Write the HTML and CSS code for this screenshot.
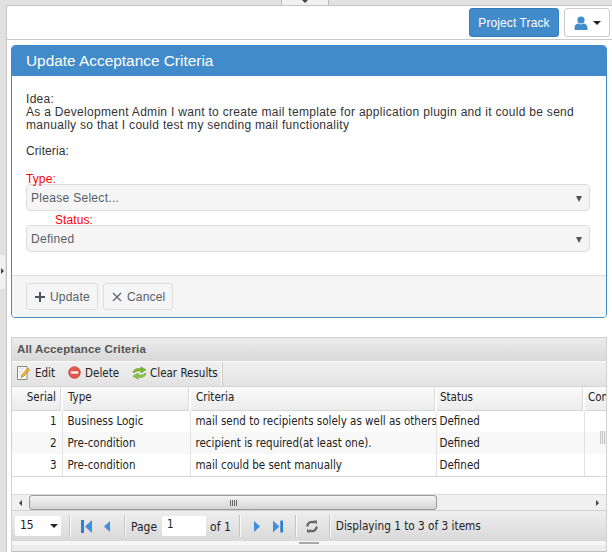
FILE: index.html
```html
<!DOCTYPE html>
<html lang="en">
<head>
<meta charset="utf-8">
<title>Update Acceptance Criteria</title>
<link rel="stylesheet" href="styles.css">
</head>
<body>
<div class="top-tab"><span class="top-arrow"></span></div>
<div class="side-handle"><span class="side-arrow"></span></div>
<main class="main">
  <header class="topbar">
    <a class="btn-track">Project Track</a>
    <button class="btn-user" type="button">
      <svg width="14" height="14" viewBox="0 0 14 14"><circle cx="7" cy="4" r="3.6" fill="#428bca"/><path d="M0.6 14V11.2C0.6 9 2.4 7.6 4.4 7.4L7 8.6L9.6 7.4C11.6 7.6 13.4 9 13.4 11.2V14Z" fill="#428bca"/></svg>
      <span class="caret"></span>
    </button>
  </header>

  <section class="panel">
    <h1 class="panel-title">Update Acceptance Criteria</h1>
    <div class="panel-body">
      <p class="idea">Idea:<br>As a Development Admin I want to create mail template for application plugin and it could be send manually so that I could test my sending mail functionality</p>
      <p class="criteria">Criteria:</p>
      <label class="req">Type:</label>
      <div class="select"><span>Please Select...</span><span class="sel-arrow"></span></div>
      <label class="req req-status">Status:</label>
      <div class="select"><span>Defined</span><span class="sel-arrow"></span></div>
    </div>
    <footer class="panel-foot">
      <button class="btn" type="button">
        <svg width="10" height="10" viewBox="0 0 10 10"><path d="M4 0h2v4h4v2h-4v4h-2v-4h-4v-2h4z" fill="#4a5560"/></svg>Update</button>
      <button class="btn" type="button">
        <svg width="10" height="10" viewBox="0 0 10 10"><path d="M1 1L9 9M9 1L1 9" stroke="#5a646e" stroke-width="1.3" fill="none"/></svg>Cancel</button>
    </footer>
  </section>

  <section class="grid">
    <div class="grid-title">All Acceptance Criteria</div>
    <div class="toolbar">
      <div class="tools">
        <span class="tool tool-edit">
          <svg width="14" height="16" viewBox="2 0 14 16"><path d="M2.5 1.5H12V14.5H2.5Z" fill="#fff" stroke="#8a8a7a"/><path d="M4 4H9M4 6.5H8M4 9H6" stroke="#d8d8c8"/><path d="M6 12.5L6.8 9.8L12.8 3.2L14.6 4.9L8.6 11.5Z" fill="#f2b53c" stroke="#b9791d" stroke-width=".7"/></svg>Edit</span>
        <span class="tool tool-del">
          <svg width="13" height="13" viewBox="0 0 14 14"><circle cx="7" cy="7" r="6.3" fill="#e2574c" stroke="#c9453c" stroke-width=".8"/><path d="M3 5.8H11V8.2H3Z" fill="#fff"/></svg>Delete</span>
        <span class="tool tool-clear">
          <svg width="15" height="14" viewBox="0 0 16 14"><path d="M1 6.5C1.8 3 5 1.5 9.5 2.4V0.4L15 3.6L9.5 7V5C6 4.4 3.5 5 2.8 6.5Z" fill="#7cb82f" stroke="#5f9420" stroke-width=".5"/><path d="M15 7.5C14.2 11 11 12.5 6.5 11.6V13.6L1 10.4L6.5 7V9C10 9.6 12.5 9 13.2 7.5Z" fill="#8cc63f" stroke="#5f9420" stroke-width=".5"/></svg>Clear Results</span>
      </div>
    </div>
    <div class="table-wrap">
      <table class="table">
        <colgroup><col class="c1"><col class="c2"><col class="c3"><col class="c4"><col class="c5"></colgroup>
        <thead>
          <tr><th class="num">Serial</th><th>Type</th><th>Criteria</th><th>Status</th><th>Comments</th></tr>
        </thead>
        <tbody>
          <tr><td class="num">1</td><td>Business Logic</td><td>mail send to recipients solely as well as others</td><td>Defined</td><td></td></tr>
          <tr class="alt"><td class="num">2</td><td>Pre-condition</td><td>recipient is required(at least one).</td><td>Defined</td><td></td></tr>
          <tr><td class="num">3</td><td>Pre-condition</td><td>mail could be sent manually</td><td>Defined</td><td></td></tr>
        </tbody>
      </table>
      <div class="col-grip"></div>
    </div>
    <div class="scrollbar">
      <span class="sb-arrow sb-left"></span>
      <div class="sb-track"><div class="sb-thumb"><span class="grip"></span></div></div>
      <span class="sb-arrow sb-right"></span>
    </div>
    <div class="pager">
      <div class="page-size"><span>15</span><span class="ps-arrow"></span></div>
      <span class="sep s1"></span>
      <svg class="pg p-first" width="11" height="13" viewBox="0 0 11 13"><path d="M0 0H3V13H0Z" fill="#2f7fd1"/><path d="M11 0V13L4 6.5Z" fill="#3f8fdf"/></svg>
      <svg class="pg p-prev" width="6" height="13" viewBox="0 0 7 13"><path d="M7 0V13L0 6.5Z" fill="#3f8fdf"/></svg>
      <span class="sep s2"></span>
      <span class="pg-text">Page</span>
      <span class="pg-input">1</span>
      <span class="pg-text">of 1</span>
      <span class="sep s3"></span>
      <svg class="pg p-next" width="6" height="13" viewBox="0 0 7 13"><path d="M0 0V13L7 6.5Z" fill="#3f8fdf"/></svg>
      <svg class="pg p-last" width="10" height="13" viewBox="0 0 11 13"><path d="M0 0V13L7 6.5Z" fill="#3f8fdf"/><path d="M8 0H11V13H8Z" fill="#2f7fd1"/></svg>
      <span class="sep s4"></span>
      <svg class="pg" width="12" height="13" viewBox="0 0 12 13"><path d="M1.4 6.5A4.6 4.6 0 0 1 8.8 2.8" fill="none" stroke="#666" stroke-width="2.2"/><path d="M10.6 6.5A4.6 4.6 0 0 1 3.2 10.2" fill="none" stroke="#666" stroke-width="2.2"/><path d="M7.5 0.4L11 0.4V4.6Z" fill="#666"/><path d="M4.5 12.6L1 12.6V8.4Z" fill="#666"/></svg>
      <span class="sep s5"></span>
      <span class="pg-info">Displaying 1 to 3 of 3 items</span>
    </div>
    <div class="resize"><span class="resize-bar"></span></div>
  </section>
</main>
</body>
</html>
```
FILE: styles.css
```css
* { box-sizing: border-box; }
html, body { height: 100%; }
body {
  margin: 0;
  padding: 5px 0 0 6px;
  background: #e1e1e1;
  font-family: "Liberation Sans", Arial, sans-serif;
  overflow: hidden;
  position: relative;
}
.top-tab {
  position: absolute;
  left: 281px; top: 0;
  width: 48px; height: 5px;
  background: #f1f1f1;
  border-left: 1px solid #b9b9b9;
  border-right: 1px solid #b9b9b9;
  display: flex;
  justify-content: center;
}
.top-arrow {
  height: 0;
  margin-top: 0;
  border-top: 3px solid #444;
  border-left: 3px solid transparent;
  border-right: 3px solid transparent;
}
.side-handle {
  position: absolute;
  left: 0; top: 255px;
  width: 5px; height: 34px;
  background: #f1f1f1;
  border-radius: 0 2px 2px 0;
}
.side-arrow {
  position: absolute;
  left: 1px; top: 13px;
  border-left: 3px solid #444;
  border-top: 3px solid transparent;
  border-bottom: 3px solid transparent;
}
.main {
  width: 606px;
  height: 547px;
  background: #fff;
  border-top: 1px solid #c6c6c6;
  border-left: 1px solid #c6c6c6;
}
.topbar {
  height: 34px;
  border-bottom: 1px solid #c9c9c9;
  display: flex;
  justify-content: flex-end;
  gap: 5px;
  padding: 2px 2px 0 0;
}
.btn-track {
  width: 90px; height: 29px;
  background: #428bca;
  border: 1px solid #357ebd;
  border-radius: 3px;
  color: #fff;
  font-size: 12px;
  letter-spacing: .1px;
  display: flex; align-items: center; justify-content: center;
}
.btn-user {
  width: 46px; height: 29px;
  background: #fff;
  border: 1px solid #ccc;
  border-radius: 3px;
  padding: 0;
  display: flex; align-items: center; justify-content: center;
  gap: 5px;
}
.caret {
  border-top: 4px solid #222;
  border-left: 4px solid transparent;
  border-right: 4px solid transparent;
}
.panel {
  width: 596px;
  height: 273px;
  margin: 5px 0 0 4px;
  border: 1px solid #428bca;
  border-radius: 4px;
  overflow: hidden;
  display: flex;
  flex-direction: column;
}
.panel-title {
  margin: 0;
  height: 30px;
  padding: 0 0 0 14px;
  background: #428bca;
  color: #fff;
  font-size: 15.4px;
  font-weight: 400;
  line-height: 29px;
}
.panel-body {
  flex: 1;
  padding: 17px 14px 0;
  color: #333;
  font-size: 12px;
  line-height: 13px;
}
.idea, .criteria { margin: 0; letter-spacing: .3px; }
.criteria { margin-top: 13px; margin-bottom: 15px; letter-spacing: .1px; }
.req { display: block; color: #f00; height: 11px; letter-spacing: .1px; }
.req-status { padding-left: 29px; margin-top: 3px; }
.select {
  width: 564px;
  height: 27px;
  background: #f5f5f5;
  border: 1px solid #ddd;
  border-radius: 4px;
  display: flex; align-items: center; justify-content: space-between;
  padding: 2px 7px 0 4px;
  color: #555e68;
  letter-spacing: .3px;
}
.sel-arrow {
  border-top: 6px solid #555;
  border-left: 3.5px solid transparent;
  border-right: 3.5px solid transparent;
}
.panel-foot {
  height: 42px;
  background: #f5f5f5;
  border-top: 1px solid #ddd;
  padding: 7px 14px 0;
  display: flex;
  gap: 5px;
  align-items: flex-start;
}
.btn {
  height: 27px;
  background: #f5f5f5;
  border: 1px solid #ddd;
  border-radius: 3px;
  padding: 0 7px 0 8px;
  font: 12px "Liberation Sans", Arial, sans-serif;
  letter-spacing: .2px;
  color: #56606a;
  display: flex; align-items: center; gap: 5px;
}
.grid {
  width: 596px;
  height: 215px;
  margin: 19px 0 0 4px;
  border: 1px solid #d0d0d0;
  border-bottom-color: #bdbdbd;
  background: #e4e4e4;
  font-family: "DejaVu Sans Condensed", "DejaVu Sans", "Liberation Sans", sans-serif;
  font-stretch: condensed;
  font-size: 11.5px;
  display: flex;
  flex-direction: column;
  overflow: hidden;
}
.grid-title {
  height: 24px;
  flex: none;
  background: linear-gradient(#ececec, #d8d8d8);
  border-bottom: 1px solid #fafafa;
  color: #555;
  font-family: "Liberation Sans", Arial, sans-serif;
  font-weight: 700;
  font-size: 11.5px;
  line-height: 22px;
  padding-left: 5px;
  letter-spacing: .15px;
}
.toolbar {
  height: 25px;
  flex: none;
  background: linear-gradient(#f0f0f0, #e2e2e2);
  border-bottom: 1px solid #d4d4d4;
}
.tools {
  display: inline-flex;
  height: 24px;
  width: 210px;
  align-items: center;
  padding: 0 0 3px 5px;
  border-right: 1px solid #fdfdfd;
  box-shadow: 1px 0 0 #c9c9c9;
  color: #222;
  white-space: nowrap;
}
.tool { display: inline-flex; align-items: center; }
.tool-edit svg { margin-right: 4px; }
.tool-del { margin-left: 13px; }
.tool-del svg { margin-right: 4px; }
.tool-clear { margin-left: 13px; }
.tool-clear svg { margin-right: 3px; }
.table-wrap {
  height: 107px;
  flex: none;
  background: #fff;
  overflow: hidden;
  position: relative;
}
.table {
  border-collapse: collapse;
  table-layout: fixed;
  width: 650px;
}
.c1 { width: 50px; } .c2 { width: 128px; } .c3 { width: 246px; } .c4 { width: 148px; } .c5 { width: 78px; }
.table th, .table td {
  font-weight: 400;
  text-align: left;
  padding: 0 0 0 5px;
  color: #222;
  white-space: nowrap;
  overflow: hidden;
  border-right: 1px solid #e2e2e2;
}
.table th:nth-child(n+4), .table td:nth-child(n+4) { padding-left: 3px; }
.table th {
  height: 23px;
  padding-bottom: 2px;
  background: linear-gradient(#fafafa, #ececec);
  border-bottom: 1px solid #d6d6d6;
  border-right: 2px solid #fff;
  box-shadow: inset -1px 0 0 #dcdcdc;
}
.table td { height: 22px; }
.table tbody tr:last-child td { border-bottom: 1px solid #d8d8d8; height: 22px; }
.table .alt td { background: #f8f8f8; }
.table .num { text-align: right; padding-right: 5px; }
.col-grip {
  position: absolute;
  right: 0; top: 44px;
  width: 6px; height: 13px;
  background: repeating-linear-gradient(90deg, #c8c8c8 0 1px, #eee 1px 2px);
}
.scrollbar {
  height: 16px;
  flex: none;
  background: #f0f0f0;
  border-top: 1px solid #dcdcdc;
  display: flex;
  align-items: center;
}
.sb-arrow { flex: none; width: 17px; display: flex; justify-content: center; }
.sb-left::before { content: ""; border-right: 3px solid #444; border-top: 3px solid transparent; border-bottom: 3px solid transparent; }
.sb-right::before { content: ""; border-left: 3px solid #444; border-top: 3px solid transparent; border-bottom: 3px solid transparent; }
.sb-track { flex: 1; height: 15px; }
.sb-thumb {
  width: 408px;
  height: 15px;
  background: linear-gradient(#f3f3f3, #d6d6d6);
  border: 1px solid #9a9a9a;
  border-radius: 3px;
  display: flex; align-items: center; justify-content: center;
}
.grip { width: 7px; height: 6px; background: repeating-linear-gradient(90deg, #666 0 1px, transparent 1px 2px); }
.pager {
  height: 31px;
  flex: none;
  background: linear-gradient(#eeeeee, #d9d9d9);
  border-top: 1px solid #d0d0d0;
  display: flex;
  align-items: center;
  padding-left: 3px;
  color: #222;
}
.page-size {
  width: 46px; height: 20px;
  background: #fff;
  border-radius: 2px;
  display: flex; align-items: center; justify-content: space-between;
  padding: 0 3px 2px 5px;
  font-size: 12px;
}
.ps-arrow { border-top: 4px solid #222; border-left: 4px solid transparent; border-right: 4px solid transparent; margin-top: 2px; }
.sep { width: 1px; height: 22px; background: #c4c4c4; box-shadow: 1px 0 0 #fafafa; flex: none; }
.s1 { margin: 0 11px 0 8px; }
.s2 { margin: 0 6px 0 14px; }
.s3 { margin: 0 14px 0 8px; }
.s4 { margin: 0 10px 0 12px; }
.s5 { margin: 0 6px 0 11px; }
.pg { flex: none; }
.p-first { margin-right: 12px; }
.p-last { margin-left: 13px; }
.pg-text { margin-top: 2px; font-size: 12px; }
.pg-input {
  width: 44px; height: 20px;
  background: #fff;
  border-radius: 2px;
  margin: 0 4px 0 5px;
  padding: 1px 5px;
  line-height: 14px;
}
.pg-info { font-size: 11.7px; }
.resize {
  flex: 1;
  background: linear-gradient(#f6f6f6 0 4px, #ececec 4px);
  display: flex;
  justify-content: center;
}
.resize-bar { width: 20px; height: 2px; background: #a8a8a8; margin-top: 1px; }
```
